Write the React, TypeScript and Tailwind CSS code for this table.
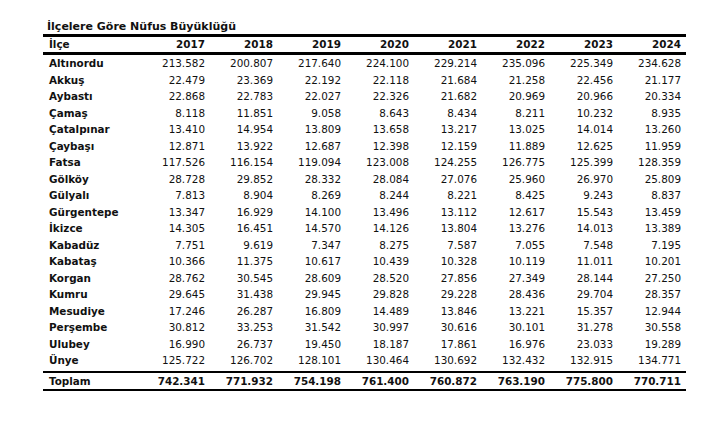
import React from "react";

const years = ["2017", "2018", "2019", "2020", "2021", "2022", "2023", "2024"];

const rows: [string, string[]][] = [
  ["Altınordu", ["213.582", "200.807", "217.640", "224.100", "229.214", "235.096", "225.349", "234.628"]],
  ["Akkuş", ["22.479", "23.369", "22.192", "22.118", "21.684", "21.258", "22.456", "21.177"]],
  ["Aybastı", ["22.868", "22.783", "22.027", "22.326", "21.682", "20.969", "20.966", "20.334"]],
  ["Çamaş", ["8.118", "11.851", "9.058", "8.643", "8.434", "8.211", "10.232", "8.935"]],
  ["Çatalpınar", ["13.410", "14.954", "13.809", "13.658", "13.217", "13.025", "14.014", "13.260"]],
  ["Çaybaşı", ["12.871", "13.922", "12.687", "12.398", "12.159", "11.889", "12.625", "11.959"]],
  ["Fatsa", ["117.526", "116.154", "119.094", "123.008", "124.255", "126.775", "125.399", "128.359"]],
  ["Gölköy", ["28.728", "29.852", "28.332", "28.084", "27.076", "25.960", "26.970", "25.809"]],
  ["Gülyalı", ["7.813", "8.904", "8.269", "8.244", "8.221", "8.425", "9.243", "8.837"]],
  ["Gürgentepe", ["13.347", "16.929", "14.100", "13.496", "13.112", "12.617", "15.543", "13.459"]],
  ["İkizce", ["14.305", "16.451", "14.570", "14.126", "13.804", "13.276", "14.013", "13.389"]],
  ["Kabadüz", ["7.751", "9.619", "7.347", "8.275", "7.587", "7.055", "7.548", "7.195"]],
  ["Kabataş", ["10.366", "11.375", "10.617", "10.439", "10.328", "10.119", "11.011", "10.201"]],
  ["Korgan", ["28.762", "30.545", "28.609", "28.520", "27.856", "27.349", "28.144", "27.250"]],
  ["Kumru", ["29.645", "31.438", "29.945", "29.828", "29.228", "28.436", "29.704", "28.357"]],
  ["Mesudiye", ["17.246", "26.287", "16.809", "14.489", "13.846", "13.221", "15.357", "12.944"]],
  ["Perşembe", ["30.812", "33.253", "31.542", "30.997", "30.616", "30.101", "31.278", "30.558"]],
  ["Ulubey", ["16.990", "26.737", "19.450", "18.187", "17.861", "16.976", "23.033", "19.289"]],
  ["Ünye", ["125.722", "126.702", "128.101", "130.464", "130.692", "132.432", "132.915", "134.771"]],
];

const totals = ["742.341", "771.932", "754.198", "761.400", "760.872", "763.190", "775.800", "770.711"];

const gridCls = "grid grid-cols-[99px_repeat(8,68px)]";

export default function App() {
  return (
    <div
      className="w-[721px] h-[424px] bg-white text-[#111] pt-[20px] pl-[43px]"
      style={{ fontFamily: '"DejaVu Sans", Verdana, sans-serif' }}
    >
      <div className="pl-[4px] text-[11px] font-bold leading-[13px] mb-[1px]">
        İlçelere Göre Nüfus Büyüklüğü
      </div>
      <div className="w-[643px] border-t-[3px] border-black">
        <div className={`${gridCls} h-[18px] leading-[15px] text-[10.4px] font-bold border-b-[3px] border-black`}>
          <div className="pl-[6px]">İlçe</div>
          {years.map((y) => (
            <div key={y} className="text-right pr-[5px]">
              {y}
            </div>
          ))}
        </div>
        <div className="pb-[2px]">
          {rows.map(([name, vals]) => (
            <div key={name} className={`${gridCls} h-[16.5px] leading-[16.5px] text-[10.4px]`}>
              <div className="pl-[6px] font-bold">{name}</div>
              {vals.map((v, i) => (
                <div key={i} className="text-right pr-[5px]">
                  {v}
                </div>
              ))}
            </div>
          ))}
        </div>
        <div className={`${gridCls} h-[20px] leading-[16px] text-[10.4px] font-bold border-t-[2px] border-b-[2px] border-black`}>
          <div className="pl-[6px]">Toplam</div>
          {totals.map((v, i) => (
            <div key={i} className="text-right pr-[5px]">
              {v}
            </div>
          ))}
        </div>
      </div>
    </div>
  );
}
